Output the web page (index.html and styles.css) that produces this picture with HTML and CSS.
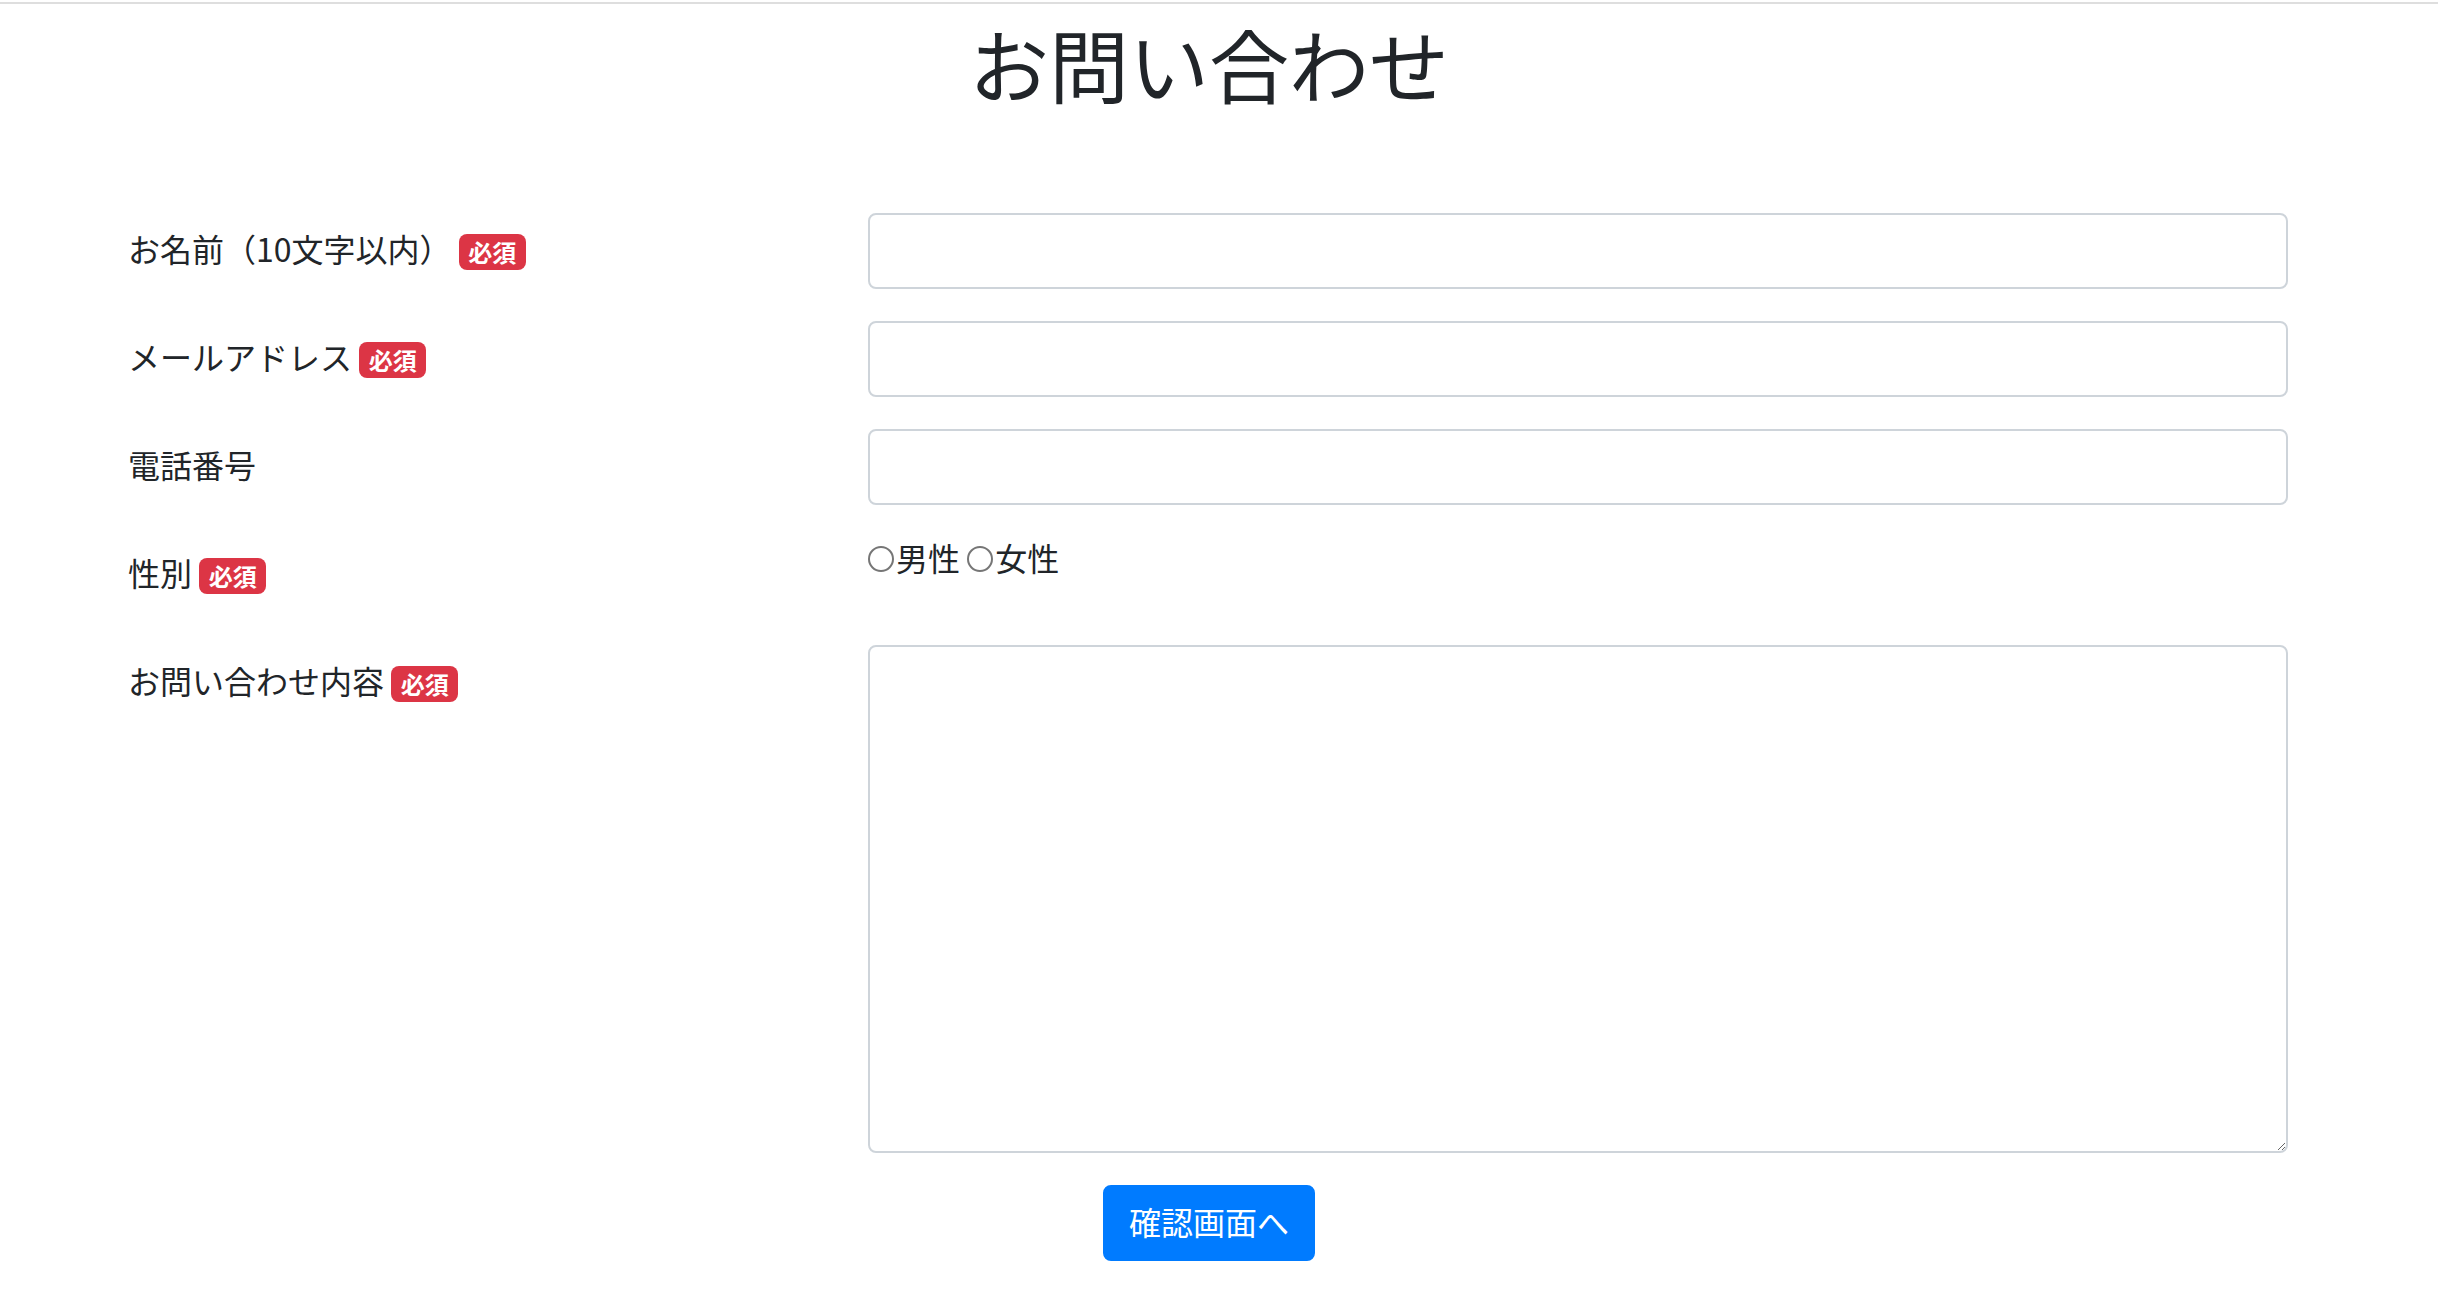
FILE: index.html
```html
<!DOCTYPE html>
<html lang="ja">
<head>
<meta charset="utf-8">
<title>お問い合わせ</title>
<link rel="stylesheet" href="styles.css">
</head>
<body>
<div class="top-rule"></div>
<div class="page">
  <main class="container">
    <h1 class="page-title">お問い合わせ</h1>
    <form class="contact-form">
      <div class="field">
        <label class="field-label" for="name">お名前（10文字以内） <span class="badge">必須</span></label>
        <div class="field-control"><input class="text-input" id="name" type="text"></div>
      </div>
      <div class="field">
        <label class="field-label" for="email">メールアドレス <span class="badge">必須</span></label>
        <div class="field-control"><input class="text-input" id="email" type="email"></div>
      </div>
      <div class="field">
        <label class="field-label" for="tel">電話番号</label>
        <div class="field-control"><input class="text-input" id="tel" type="tel"></div>
      </div>
      <div class="field">
        <div class="field-label">性別 <span class="badge">必須</span></div>
        <div class="field-control radio-group"><label class="radio-option"><input class="radio" type="radio" name="gender" value="male">男性</label> <label class="radio-option"><input class="radio" type="radio" name="gender" value="female">女性</label></div>
      </div>
      <div class="field">
        <label class="field-label" for="message">お問い合わせ内容 <span class="badge">必須</span></label>
        <div class="field-control"><textarea class="text-area" id="message" rows="10"></textarea></div>
      </div>
      <div class="actions">
        <button class="btn-primary" type="submit">確認画面へ</button>
      </div>
    </form>
  </main>
</div>
</body>
</html>
```

FILE: styles.css
```css
html, body {
  margin: 0;
  padding: 0;
  background: #fff;
}

body {
  font-family: "Noto Sans CJK JP", "Noto Sans", sans-serif;
  font-size: 32px;
  line-height: 48px;
  color: #212529;
}

.top-rule {
  margin-top: 2px;
  height: 2px;
  background: #dedede;
}

.page {
  padding-right: 20px;
}

.container {
  width: 2158px;
  margin: 0 auto;
}

.page-title {
  margin: 10px 0 103px;
  font-size: 80px;
  line-height: 96px;
  font-weight: 400;
  text-align: center;
}

.contact-form {
  margin: 0;
}

.field {
  display: grid;
  grid-template-columns: 738px 1fr;
  margin-bottom: 32px;
}

.field-label {
  padding: 11px 0 17px;
  margin-left: -2px;
  line-height: 48px;
}

.badge {
  display: inline-block;
  padding: 6px 9.6px;
  font-size: 24px;
  font-weight: 700;
  line-height: 1;
  color: #fff;
  background: #dc3545;
  border-radius: 8px;
  vertical-align: baseline;
}

.text-input,
.text-area {
  display: block;
  box-sizing: border-box;
  width: 100%;
  margin: 0;
  padding: 12px 24px;
  font: inherit;
  color: #495057;
  background: #fff;
  border: 2px solid #ced4da;
  border-radius: 8px;
  outline: none;
}

.text-input {
  height: 76px;
}

.text-area {
  height: 508px;
  resize: vertical;
}

.radio-group {
  line-height: 48px;
  margin-top: -4px;
}

.radio-option {
  white-space: nowrap;
}

.radio {
  -webkit-appearance: none;
  appearance: none;
  display: inline-block;
  box-sizing: border-box;
  width: 26px;
  height: 26px;
  margin: 0 2px 0 0;
  border: 2px solid #767676;
  border-radius: 50%;
  background: #fff;
  vertical-align: -1px;
}

.radio:checked {
  background: radial-gradient(circle, #0075ff 0 6px, #fff 7px);
  border-color: #0075ff;
}

.actions {
  text-align: center;
}

.btn-primary {
  display: inline-block;
  padding: 10px 24px 14px;
  font: inherit;
  line-height: 48px;
  color: #fff;
  background: #007bff;
  border: 2px solid #007bff;
  border-radius: 8px;
  cursor: pointer;
}
```
